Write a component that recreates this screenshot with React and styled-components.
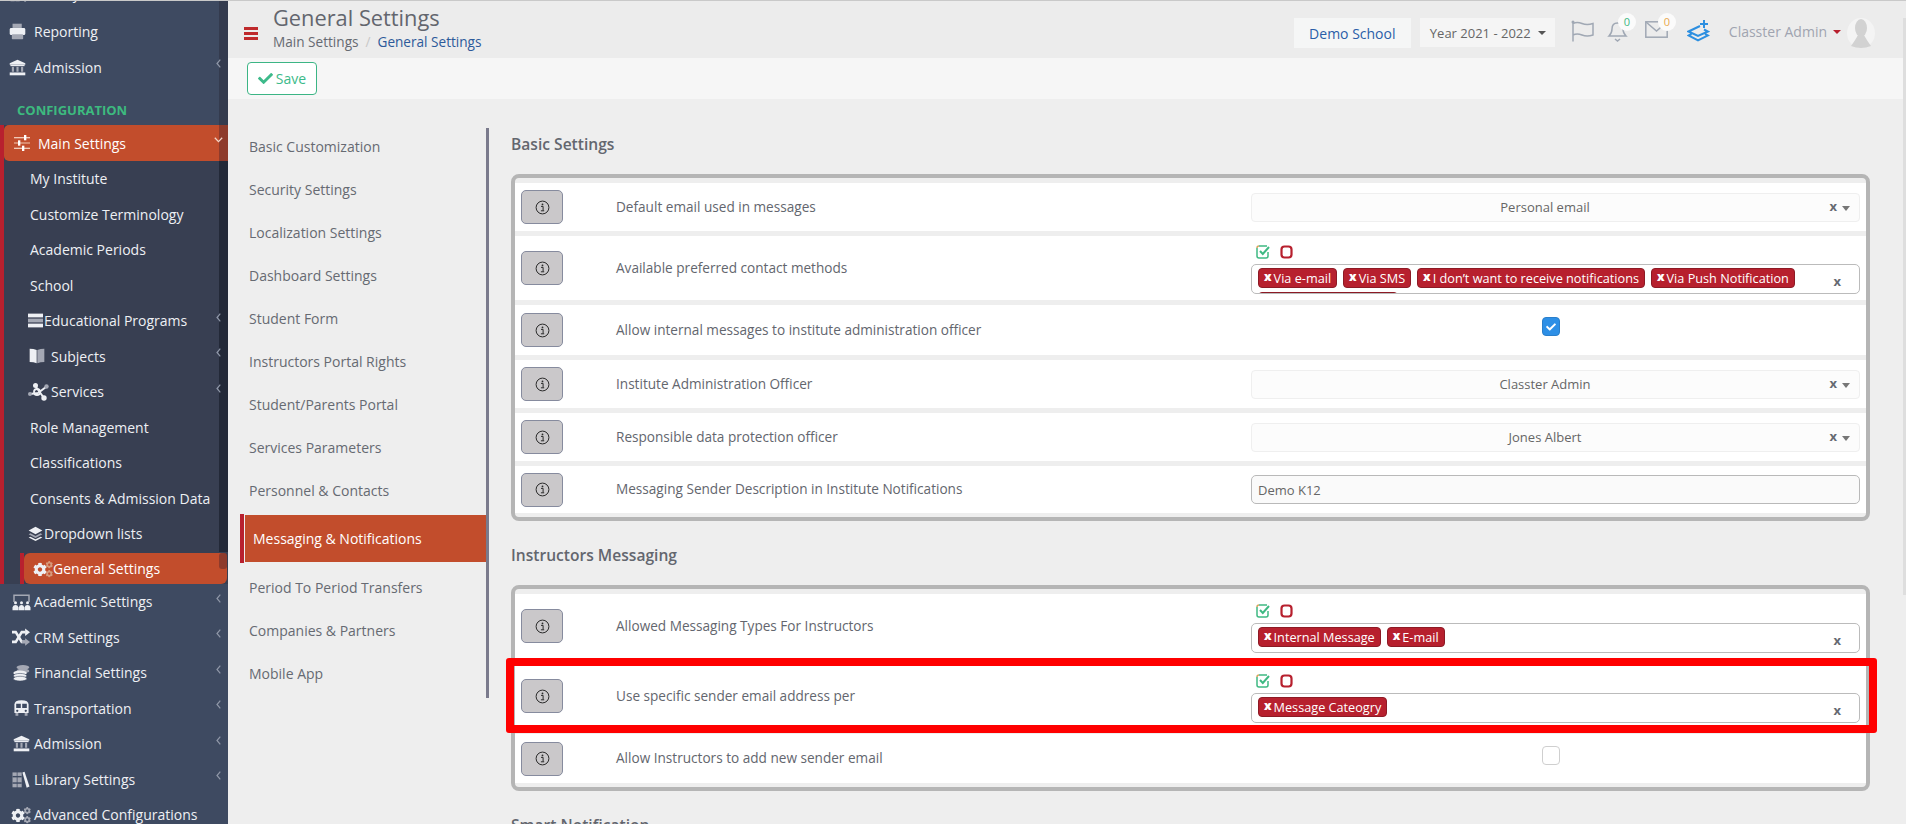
import React from 'react'
import styled, { createGlobalStyle } from 'styled-components'
import { FaCheck, FaCog } from 'react-icons/fa'

const GlobalStyle = createGlobalStyle`
  html, body { margin: 0; padding: 0; background: #eeeeee; }
  * { box-sizing: border-box; }
  body { font-family: "Open Sans", "Liberation Sans", sans-serif; font-size: 14px; color: #5f5f5f; }
`

const WHITE = '#eef0f4'
const MUTED = '#a4a8b4'

/* sidebar icons, two tones like the duotone set of the original */
const Svg = ({ w = 20, h = 20, box = '0 0 24 24', children }) => (
  <svg width={w} height={h} viewBox={box}>{children}</svg>
)

const Cogs = ({ second = MUTED }) => (
  <svg width="20" height="18" viewBox="0 0 20 18">
    <FaCog x="0" y="2.500" size="14" color={WHITE} />
    <FaCog x="12.500" y="1" size="7.500" color={second} />
    <FaCog x="12.500" y="10" size="7.500" color={second} />
  </svg>
)

const icons = {
  printer: (
    <Svg w={17} h={17}>
      <rect x="5" y="1" width="13" height="6" fill={MUTED} />
      <rect x="1" y="7" width="22" height="10" rx="2" fill={WHITE} />
      <rect x="4" y="16" width="16" height="7" rx="1" fill={MUTED} />
    </Svg>
  ),
  bank: (
    <Svg w={17} h={17}>
      <path d="M12 1 L23 6 V8 H1 V6Z" fill={WHITE} />
      <rect x="2" y="8.500" width="20" height="1.600" fill={WHITE} />
      <rect x="4" y="11" width="3" height="7" fill={MUTED} />
      <rect x="10.500" y="11" width="3" height="7" fill={MUTED} />
      <rect x="17" y="11" width="3" height="7" fill={MUTED} />
      <rect x="1" y="19" width="22" height="4" fill={WHITE} />
    </Svg>
  ),
  sliders: (
    <Svg w={18} h={16}>
      <rect x="0" y="3" width="24" height="2" fill="#f0c9b6" />
      <rect x="0" y="11" width="24" height="2" fill="#e6a98e" />
      <rect x="0" y="19" width="24" height="2" fill="#f0c9b6" />
      <rect x="15" y="0" width="3.500" height="8" fill="#fff" />
      <rect x="6" y="8" width="3.500" height="8" fill="#fff" />
      <rect x="12" y="16" width="3.500" height="8" fill="#fff" />
    </Svg>
  ),
  server: (
    <Svg w={15} h={15}>
      <rect x="0" y="1" width="24" height="6" fill={WHITE} />
      <rect x="0" y="9" width="24" height="6" fill={MUTED} />
      <rect x="0" y="17" width="24" height="6" fill={WHITE} />
    </Svg>
  ),
  book: (
    <Svg w={18} h={16}>
      <path d="M1 1 Q7 1 11.500 3 V23 Q7 21 1 21Z" fill={WHITE} />
      <path d="M12.500 3 Q17 1 23 1 V21 Q17 21 12.500 23Z" fill={MUTED} />
    </Svg>
  ),
  nodes: (
    <svg width="21" height="19" viewBox="0 0 21 19">
      <path d="M8 5 L16 16 M18 5 L10 11 M2 12 L10 11" stroke={WHITE} strokeWidth="2" fill="none" />
      <circle cx="9" cy="10" r="3" fill="none" stroke={WHITE} strokeWidth="1.800" />
      <circle cx="7.500" cy="3.500" r="2.500" fill={WHITE} />
      <circle cx="16" cy="16" r="2.700" fill={WHITE} />
      <circle cx="18.500" cy="4.500" r="2.200" fill={MUTED} />
      <circle cx="2" cy="12" r="2" fill={MUTED} />
    </svg>
  ),
  layers: (
    <Svg w={15} h={15}>
      <path d="M12 1 L23 7 L12 13 L1 7Z" fill={WHITE} />
      <path d="M4 11.500 L12 16 L20 11.500 L23 13 L12 19 L1 13Z" fill={MUTED} />
      <path d="M4 17 L12 21 L20 17 L23 18.500 L12 24 L1 18.500Z" fill={WHITE} />
    </Svg>
  ),
  people: (
    <Svg w={21} h={18}>
      <path d="M1 12 V2 H23 V12 H21 V4 H3 V12Z" fill={MUTED} />
      <circle cx="4" cy="13" r="2" fill={WHITE} /><circle cx="12" cy="13" r="2" fill={WHITE} /><circle cx="20" cy="13" r="2" fill={WHITE} />
      <path d="M0 23 V19 Q1 16 4 16 Q7 16 8 19 V23Z M8.500 23 V19 Q9 16 12 16 Q15 16 15.500 19 V23Z M16 23 V19 Q17 16 20 16 Q23 16 24 19 V23Z" fill={WHITE} />
    </Svg>
  ),
  shuffle: (
    <Svg w={18} h={18}>
      <path d="M0 18.500 H5 L13 5.500 H18" fill="none" stroke={WHITE} strokeWidth="3.400" />
      <path d="M17.500 0.500 L24 5.500 L17.500 10.500Z" fill={WHITE} />
      <path d="M0 5.500 H5 L13 18.500 H18" fill="none" stroke={WHITE} strokeWidth="3.400" />
      <path d="M17.500 13.500 L24 18.500 L17.500 23.500Z" fill={MUTED} />
      <rect x="13" y="16.800" width="5" height="3.400" fill={MUTED} />
    </Svg>
  ),
  coins: (
    <Svg w={17} h={18}>
      <ellipse cx="14" cy="4" rx="9" ry="3.400" fill={MUTED} />
      <ellipse cx="14" cy="9" rx="9" ry="3.400" fill={MUTED} />
      <ellipse cx="10" cy="12" rx="9.500" ry="3.400" fill={WHITE} />
      <ellipse cx="10" cy="16" rx="9.500" ry="3.400" fill={WHITE} stroke="#3e4a61" strokeWidth=".8" />
      <ellipse cx="10" cy="20" rx="9.500" ry="3.400" fill={WHITE} stroke="#3e4a61" strokeWidth=".8" />
    </Svg>
  ),
  bus: (
    <Svg w={17} h={18}>
      <path d="M2 7 Q2 1 12 1 Q22 1 22 7 V19 H2Z" fill={WHITE} />
      <rect x="4.500" y="6" width="6.500" height="6" fill="#3e4a61" />
      <rect x="13" y="6" width="6.500" height="6" fill="#3e4a61" />
      <circle cx="6" cy="16" r="1.600" fill="#3e4a61" />
      <circle cx="18" cy="16" r="1.600" fill="#3e4a61" />
      <rect x="3.500" y="19" width="4" height="4" fill={MUTED} />
      <rect x="16.500" y="19" width="4" height="4" fill={MUTED} />
    </Svg>
  ),
  library: (
    <Svg w={20} h={17}>
      <rect x="0" y="2" width="6" height="21" fill={MUTED} />
      <rect x="7" y="2" width="6" height="21" fill={MUTED} />
      <path d="M14 2 L17 1 L24 22 L20 23.500Z" fill={WHITE} />
      <rect x="0" y="7" width="13" height="2" fill="#3e4a61" />
      <rect x="0" y="16" width="13" height="2" fill="#3e4a61" />
    </Svg>
  ),
}

const Page = styled.div`
  width: 100%;
  height: 100vh;
  overflow: hidden;
  position: relative;
`

const TopLine = styled.div`
  height: 1px;
  background: #c9c9c9;
`

const Shell = styled.div`
  display: flex;
  height: calc(100vh - 1px);
`

/* sidebar */
const Sidebar = styled.nav`
  flex: 0 0 228px;
  background: #3e4a61;
  color: ${WHITE};
  overflow: hidden;
`

const TopGroup = styled.div`
  position: relative;
  margin-top: -25px;

  &::after {
    content: "";
    position: absolute;
    right: 0;
    top: 25px;
    bottom: 0;
    width: 9px;
    background: #343b4e;
  }
`

const NavRow = styled.div`
  position: relative;
  z-index: 1;
  display: flex;
  align-items: center;
  height: 35.5px;
  padding-left: ${p => p.$indent || 0}px;
  white-space: nowrap;
  color: ${WHITE};

  ${TopGroup} > &:first-child {
    margin-bottom: 2.25px;
  }
`

const IconSlot = styled.span`
  flex: 0 0 ${p => p.$w}px;
  display: flex;
  align-items: center;
  justify-content: ${p => p.$align || 'flex-start'};
`

const Chevron = styled.svg`
  position: absolute;
  right: 7px;
  top: 50%;
  margin-top: -8px;
  width: 5px;
  height: 9px;
`

const ConfigLabel = styled.div`
  height: 40.25px;
  padding: 16px 0 0 17px;
  font-size: 13px;
  line-height: 18px;
  font-weight: 700;
  color: #3dba7f;
`

const SettingsGroup = styled.div`
  background: #383f52;
  border-left: 4px solid #b8202e;
`

const MainActive = styled.div`
  position: relative;
  display: flex;
  align-items: center;
  height: 36px;
  padding-left: 9px;
  background: #c24d2c;
  border-radius: 5px 0 0 5px;
  color: #fff;
  overflow: hidden;

  &::after {
    content: "";
    position: absolute;
    right: 0;
    top: 0;
    bottom: 0;
    width: 9px;
    background: #8e3b2c;
  }
`

const SubList = styled.div`
  position: relative;

  &::after {
    content: "";
    position: absolute;
    right: 0;
    top: 0;
    bottom: 0;
    width: 9px;
    background: #232938;
  }
`

const GeneralRow = styled.div`
  position: relative;
  display: flex;
  align-items: center;
  height: 31px;
  margin: 1.5px 1px 0 16px;
  padding-left: 9px;
  border-left: 4px solid #b8202e;
  color: #fff;

  &::before {
    content: "";
    position: absolute;
    inset: 0;
    background: #c24d2c;
    border-radius: 6px;
  }

  &::after {
    content: "";
    position: absolute;
    right: 0;
    top: 0;
    width: 8px;
    height: 16px;
    background: #8e3b2c;
    border-radius: 3px;
  }
`

const GeneralInner = styled.span`
  position: relative;
  z-index: 1;
  display: flex;
  align-items: center;
`

/* main column */
const Main = styled.div`
  position: relative;
  flex: 1;
  min-width: 0;
  display: flex;
  flex-direction: column;
`

const Header = styled.header`
  flex: 0 0 57px;
  display: flex;
  align-items: flex-start;
  padding-left: 16px;
  background: #ececec;
`

const Burger = styled.svg`
  width: 14px;
  height: 13px;
  margin: 26px 15px 0 0;
`

const TitleBlock = styled.div`
  padding-top: 4px;
`

const Title = styled.div`
  font-size: 21.8px;
  line-height: 26px;
  color: #63666e;
`

const Crumbs = styled.div`
  display: flex;
  margin-top: 1px;
  font-size: 13.6px;
  line-height: 20px;
  color: #666a72;
`

const CrumbSep = styled.span`
  margin: 0 7px;
  color: #c8c8c8;
`

const CrumbLink = styled.span`
  color: #2c5a9a;
`

const TopRight = styled.div`
  margin-left: auto;
  padding: 17px 31px 0 0;
  display: flex;
  align-items: flex-start;
`

const SchoolBtn = styled.div`
  width: 117px;
  height: 30px;
  display: flex;
  align-items: center;
  justify-content: center;
  background: #f5f6f6;
  color: #2a5ea8;
`

const YearBtn = styled.div`
  width: 135px;
  height: 29px;
  margin-left: 9px;
  padding-left: 10px;
  display: flex;
  align-items: center;
  background: #f5f5f5;
  font-size: 13px;
  color: #666;
`

const Caret = styled.span`
  display: inline-block;
  width: 0;
  height: 0;
  margin-left: ${p => p.$ml || 7}px;
  border-left: 4px solid transparent;
  border-right: 4px solid transparent;
  border-top: 4px solid ${p => p.$color || '#555'};
`

const TopIcon = styled.div`
  position: relative;
  flex: 0 0 ${p => p.$w}px;
  margin-left: ${p => p.$ml}px;
  margin-top: 2px;
`

const Badge = styled.span`
  position: absolute;
  right: -8px;
  top: -7px;
  width: 18px;
  height: 18px;
  border-radius: 50%;
  background: #fbfbfb;
  font-size: 11px;
  line-height: 18px;
  text-align: center;
  color: ${p => p.$color};
`

const UserName = styled.div`
  margin: 4px 0 0 19px;
  line-height: 20px;
  color: #a0a4b0;
  display: flex;
  align-items: center;
`

const Avatar = styled.svg`
  width: 28px;
  height: 30px;
  margin-left: 6px;
`

const SaveBar = styled.div`
  flex: 0 0 41px;
  padding: 4px 0 0 19px;
  background: #f6f6f6;
`

const SaveBtn = styled.button`
  width: 70px;
  height: 33px;
  display: flex;
  align-items: center;
  justify-content: center;
  gap: 3px;
  background: #fff;
  border: 1px solid #3cb585;
  border-radius: 4px;
  font: 14px "Open Sans", sans-serif;
  color: #3dba8a;
  padding: 0;
`

const Columns = styled.div`
  flex: 1;
  display: flex;
  align-items: flex-start;
`

/* left settings menu */
const SideMenu = styled.div`
  flex: 0 0 261px;
  margin-top: 29px;
  border-right: 3px solid #7a7a8c;
`

const MenuItem = styled.div`
  height: 38px;
  margin-bottom: 5px;
  padding: 0 0 2px 21px;
  display: flex;
  align-items: center;
  color: #666a72;
`

const MenuActive = styled.div`
  position: relative;
  height: 47px;
  margin: 0 0 7px 17px;
  padding-left: 8px;
  display: flex;
  align-items: center;
  background: #c24d2c;
  color: #fff;

  &::before {
    content: "";
    position: absolute;
    left: -5px;
    top: -1px;
    bottom: -1px;
    width: 4px;
    background: #b8202e;
  }
`

/* right content */
const Content = styled.div`
  flex: 1;
  min-width: 0;
  padding: 35px 36px 0 22px;
`

const SectionTitle = styled.h3`
  margin: 0 0 20px;
  font-size: 15.6px;
  line-height: 20px;
  font-weight: 600;
  color: #63666e;
`

const Card = styled.div`
  display: flex;
  flex-direction: column;
  gap: 5px;
  margin-bottom: 24px;
  padding: 5px 0 4px;
  border: 4px solid #b5b5b5;
  border-radius: 8px;
  background: #eeeeee;
`

const Row = styled.div`
  position: relative;
  display: grid;
  grid-template-columns: 42px 1fr 609px;
  align-items: center;
  height: ${p => p.$h}px;
  padding: 0 6px;
  background: #fff;
`

const InfoBtn = styled.div`
  width: 42px;
  height: 34px;
  display: flex;
  align-items: center;
  justify-content: center;
  background: #cac8ca;
  border: 1px solid #868b9e;
  border-radius: 5px;
`

const Label = styled.div`
  margin: 0 0 2px 53px;
  font-size: 13.6px;
  color: #63666e;
`

const Highlight = styled.div`
  position: absolute;
  left: -9px;
  right: -11px;
  top: -5px;
  bottom: -4px;
  border: 8px solid #ff0000;
  border-radius: 3px;
  pointer-events: none;
`

const Select = styled.div`
  position: relative;
  height: 29px;
  padding-right: 21px;
  display: flex;
  align-items: center;
  justify-content: center;
  border: 1px solid #efefef;
  border-radius: 4px;
  background: #fcfcfc;
  font-size: 13px;
  color: #666;
`

const ClearX = styled.span`
  position: absolute;
  right: ${p => p.$right}px;
  top: ${p => p.$top}px;
  font-size: 13px;
  line-height: 13px;
  font-weight: 700;
  color: #666a72;
`

const ArrowSlot = styled.span`
  position: absolute;
  right: 9px;
  top: 12px;
  display: flex;
`

const TextField = styled.div`
  height: 29px;
  padding-left: 6px;
  display: flex;
  align-items: center;
  border: 1px solid #b9b9b9;
  border-radius: 5px;
  background: #fafafa;
  font-size: 13px;
  color: #666;
`

const MultiWrap = styled.div`
  align-self: start;
  margin-top: ${p => p.$top}px;
`

const SelectAll = styled.div`
  display: flex;
  align-items: center;
  gap: 9px;
  height: 14px;
  margin: 0 0 ${p => p.$gap}px 5px;
`

const MultiBox = styled.div`
  position: relative;
  height: 30px;
  padding: 3px 40px 0 6px;
  display: flex;
  flex-wrap: wrap;
  align-content: flex-start;
  gap: 4px 6px;
  border: 1px solid #bbbbbb;
  border-radius: 5px;
  overflow: hidden;
`

const Tag = styled.span`
  display: inline-flex;
  align-items: center;
  height: 20px;
  padding: 0 5px;
  background: #b7202e;
  border: 1px solid #8d1a25;
  border-radius: 4px;
  font-size: 12.7px;
  color: #fff;
  white-space: nowrap;
`

const TagX = styled.span`
  margin: 0 2px 2px 0;
  font-size: 12px;
  line-height: 12px;
  font-weight: 800;
`

const HiddenTag = styled.span`
  flex: 0 0 140px;
  height: 20px;
  background: #b7202e;
  border: 1px solid #8d1a25;
  border-radius: 4px;
`

const CheckCell = styled.div`
  justify-self: start;
  width: 18px;
  height: 19px;
  margin: 0 0 7px 291px;
  display: flex;
  align-items: center;
  justify-content: center;
  border-radius: 4px;
  background: ${p => (p.$on ? '#2d8fe6' : '#fff')};
  border: 1px solid ${p => (p.$on ? '#2a7fcb' : '#cfcfcf')};
  color: #fff;
`

const ScrollThumb = styled.div`
  position: absolute;
  right: 0;
  top: 17px;
  width: 3px;
  height: 577px;
  background: #dedede;
`

const ChevronLeft = () => (
  <Chevron viewBox="0 0 5 9"><path d="M4.300 .7 L1 4.500 L4.300 8.300" fill="none" stroke="#8f97a8" strokeWidth="1.200" /></Chevron>
)

const ChevronDown = styled.svg`
  position: absolute;
  right: 5px;
  top: 12px;
  z-index: 1;
  width: 9px;
  height: 6px;
`

const InfoIcon = () => (
  <svg width="15" height="15" viewBox="0 0 15 15">
    <circle cx="7.500" cy="7.500" r="6.400" fill="none" stroke="#2b2b2b" strokeWidth="1" />
    <circle cx="7.500" cy="4.400" r=".9" fill="#2b2b2b" />
    <path d="M6 6.400 H8.100 V10.600 M5.900 10.800 H9.200" fill="none" stroke="#2b2b2b" strokeWidth="1" />
  </svg>
)

const CheckAllIcon = () => (
  <svg width="15" height="14" viewBox="0 0 15 14">
    <path d="M1 3 Q1 1 3 1" fill="none" stroke="#d9a45f" strokeWidth="1.500" />
    <path d="M1 3 V11 Q1 13 3 13 H10 Q12 13 12 11 V7 M11 1 H3" fill="none" stroke="#3fb983" strokeWidth="1.500" />
    <path d="M4 6 L6.800 9 L13 2" fill="none" stroke="#3fb983" strokeWidth="2" />
  </svg>
)

const ClearAllIcon = () => (
  <svg width="13" height="14" viewBox="0 0 13 14">
    <rect x="1.500" y="1.500" width="10" height="11" rx="3" fill="none" stroke="#b7202e" strokeWidth="2.200" />
  </svg>
)

const Arrow = () => (
  <svg width="8" height="5" viewBox="0 0 8 5"><path d="M0 0 H8 L4 5Z" fill="#777" /></svg>
)

const SelectField = ({ value }) => (
  <Select>
    {value}
    <ClearX $right={22} $top={6}>x</ClearX>
    <ArrowSlot><Arrow /></ArrowSlot>
  </Select>
)

const MultiField = ({ tags, top, gap, extra }) => (
  <MultiWrap $top={top}>
    <SelectAll $gap={gap}><CheckAllIcon /><ClearAllIcon /></SelectAll>
    <MultiBox>
      {tags.map(t => <Tag key={t}><TagX>x</TagX>{t}</Tag>)}
      {extra && <HiddenTag />}
      <ClearX $right={18} $top={10}>x</ClearX>
    </MultiBox>
  </MultiWrap>
)

const SettingRow = ({ h, label, children, marked }) => (
  <Row $h={h}>
    <InfoBtn><InfoIcon /></InfoBtn>
    <Label>{label}</Label>
    {children}
    {marked && <Highlight />}
  </Row>
)

const topItems = [
  { icon: 'library', label: 'Library' },
  { icon: 'printer', label: 'Reporting' },
  { icon: 'bank', label: 'Admission', more: true },
]

const subItems = [
  { label: 'My Institute' },
  { label: 'Customize Terminology' },
  { label: 'Academic Periods' },
  { label: 'School' },
  { icon: 'server', label: 'Educational Programs', w: 16, more: true },
  { icon: 'book', label: 'Subjects', w: 23, more: true },
  { icon: 'nodes', label: 'Services', w: 23, more: true },
  { label: 'Role Management' },
  { label: 'Classifications' },
  { label: 'Consents & Admission Data' },
  { icon: 'layers', label: 'Dropdown lists', w: 16 },
]

const bottomItems = [
  { icon: 'people', label: 'Academic Settings' },
  { icon: 'shuffle', label: 'CRM Settings' },
  { icon: 'coins', label: 'Financial Settings' },
  { icon: 'bus', label: 'Transportation' },
  { icon: 'bank', label: 'Admission' },
  { icon: 'library', label: 'Library Settings' },
  { label: 'Advanced Configurations' },
]

const menuBefore = ['Basic Customization', 'Security Settings', 'Localization Settings', 'Dashboard Settings', 'Student Form', 'Instructors Portal Rights', 'Student/Parents Portal', 'Services Parameters', 'Personnel & Contacts']
const menuAfter = ['Period To Period Transfers', 'Companies & Partners', 'Mobile App']

const App = () => (
  <Page>
    <GlobalStyle />
    <TopLine />
    <Shell>
      <Sidebar>
        <TopGroup>
          {topItems.map(i => (
            <NavRow key={i.label} $indent={9}>
              <IconSlot $w={25}>{icons[i.icon]}</IconSlot>
              {i.label}
              {i.more && <ChevronLeft />}
            </NavRow>
          ))}
          <ConfigLabel>CONFIGURATION</ConfigLabel>
        </TopGroup>

        <SettingsGroup>
          <MainActive>
            <IconSlot $w={25}>{icons.sliders}</IconSlot>
            Main Settings
            <ChevronDown viewBox="0 0 9 6"><path d="M.8 .8 L4.500 4.600 L8.200 .8" fill="none" stroke="#f3d5c8" strokeWidth="1.300" /></ChevronDown>
          </MainActive>
          <SubList>
            {subItems.map(i => (
              <NavRow key={i.label} $indent={i.icon ? 24 : 26}>
                {i.icon && <IconSlot $w={i.w}>{icons[i.icon]}</IconSlot>}
                {i.label}
                {i.more && <ChevronLeft />}
              </NavRow>
            ))}
          </SubList>
          <GeneralRow>
            <GeneralInner>
              <IconSlot $w={20}><Cogs second="#d79a7c" /></IconSlot>
              General Settings
            </GeneralInner>
          </GeneralRow>
        </SettingsGroup>

        {bottomItems.map(i => (
          <NavRow key={i.label + i.icon} $indent={8}>
            <IconSlot $w={26} $align="center">{i.icon ? icons[i.icon] : <Cogs />}</IconSlot>
            {i.label}
            {i.icon && <ChevronLeft />}
          </NavRow>
        ))}
      </Sidebar>

      <Main>
        <Header>
          <Burger viewBox="0 0 14 13">
            <rect width="14" height="3" fill="#bf2a2c" />
            <rect y="5" width="14" height="3" fill="#bf2a2c" />
            <rect y="10" width="14" height="3" fill="#bf2a2c" />
          </Burger>
          <TitleBlock>
            <Title>General Settings</Title>
            <Crumbs>Main Settings<CrumbSep>/</CrumbSep><CrumbLink>General Settings</CrumbLink></Crumbs>
          </TitleBlock>
          <TopRight>
            <SchoolBtn>Demo School</SchoolBtn>
            <YearBtn>Year 2021 - 2022<Caret /></YearBtn>
            <TopIcon $w={23} $ml={16}>
              <svg width="23" height="22" viewBox="0 0 23 22">
                <circle cx="2" cy="2" r="1.500" fill="#a0a8b4" />
                <path d="M2 2 V21.500 M2 3.500 Q6 1.500 11 3.500 Q16 5.500 22 3.500 V15 Q16 17 11 15 Q6 13 2 15" fill="none" stroke="#a0a8b4" strokeWidth="1.500" />
              </svg>
            </TopIcon>
            <TopIcon $w={21} $ml={13}>
              <svg width="21" height="22" viewBox="0 0 21 22">
                <path d="M2 16 Q5 13 5 9 Q5 3 10.500 3 Q16 3 16 9 Q16 13 19 16Z M8 19 L10.500 21 L13 19" fill="none" stroke="#a0a8b4" strokeWidth="1.500" />
              </svg>
              <Badge $color="#3fb983">0</Badge>
            </TopIcon>
            <TopIcon $w={23} $ml={17}>
              <svg width="23" height="18" viewBox="0 0 23 18">
                <rect x=".8" y="1.800" width="21.400" height="15.400" fill="none" stroke="#a0a8b4" strokeWidth="1.500" />
                <path d="M1 2 L11.500 11 L22 2" fill="none" stroke="#a0a8b4" strokeWidth="1.500" />
              </svg>
              <Badge $color="#e9a94f">0</Badge>
            </TopIcon>
            <TopIcon $w={23} $ml={19}>
              <svg width="23" height="22" viewBox="0 0 23 22">
                <path d="M13 6 L1.500 11.500 L11 16 L21 11.500 L17 9.500 M4.500 14 L1.500 15.500 L11 20.500 L21 15.500 L18 14" fill="none" stroke="#2d8fe0" strokeWidth="2" />
                <path d="M17 0 V8 M13 4 H21" stroke="#2d8fe0" strokeWidth="2" />
              </svg>
            </TopIcon>
            <UserName>Classter Admin<Caret $ml={6} $color="#b8202e" /></UserName>
            <Avatar viewBox="0 0 28 30">
              <ellipse cx="14" cy="15" rx="14" ry="15" fill="#f4f4f4" />
              <ellipse cx="14" cy="10" rx="6" ry="9" fill="#d2d2d2" />
              <path d="M4 28 Q9 21 11 17 H17 Q19 21 24 28 Q19 30 14 30 Q9 30 4 28Z" fill="#d2d2d2" />
            </Avatar>
          </TopRight>
        </Header>

        <SaveBar>
          <SaveBtn><FaCheck size={15} color="#3dba8a" />Save</SaveBtn>
        </SaveBar>

        <Columns>
          <SideMenu>
            {menuBefore.map(m => <MenuItem key={m}>{m}</MenuItem>)}
            <MenuActive>Messaging &amp; Notifications</MenuActive>
            {menuAfter.map(m => <MenuItem key={m}>{m}</MenuItem>)}
          </SideMenu>

          <Content>
            <SectionTitle>Basic Settings</SectionTitle>
            <Card>
              <SettingRow h={48} label="Default email used in messages"><SelectField value="Personal email" /></SettingRow>
              <SettingRow h={64} label="Available preferred contact methods">
                <MultiField top={9} gap={5} extra tags={['Via e-mail', 'Via SMS', 'I don\u2019t want to receive notifications', 'Via Push Notification']} />
              </SettingRow>
              <SettingRow h={50} label="Allow internal messages to institute administration officer">
                <CheckCell $on><FaCheck size={10} /></CheckCell>
              </SettingRow>
              <SettingRow h={48} label="Institute Administration Officer"><SelectField value="Classter Admin" /></SettingRow>
              <SettingRow h={48} label="Responsible data protection officer"><SelectField value="Jones Albert" /></SettingRow>
              <SettingRow h={47} label="Messaging Sender Description in Institute Notifications"><TextField>Demo K12</TextField></SettingRow>
            </Card>

            <SectionTitle>Instructors Messaging</SectionTitle>
            <Card>
              <SettingRow h={64} label="Allowed Messaging Types For Instructors">
                <MultiField top={10} gap={5} tags={['Internal Message', 'E-mail']} />
              </SettingRow>
              <SettingRow h={66} marked label="Use specific sender email address per">
                <MultiField top={11} gap={5} tags={['Message Cateogry']} />
              </SettingRow>
              <SettingRow h={49} label="Allow Instructors to add new sender email">
                <CheckCell />
              </SettingRow>
            </Card>

            <SectionTitle>Smart Notification</SectionTitle>
          </Content>
        </Columns>

        <ScrollThumb />
      </Main>
    </Shell>
  </Page>
)

export default App
